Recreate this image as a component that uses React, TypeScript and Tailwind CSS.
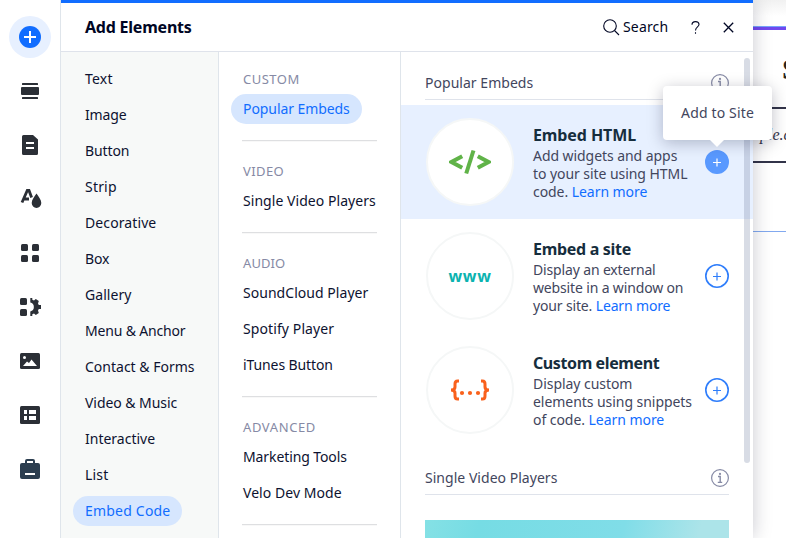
import React from "react";

type Item = { name: string; tracking: string; active?: boolean };

const categories: Item[] = [
  { name: "Text", tracking: "tracking-[0.2px]" },
  { name: "Image", tracking: "tracking-[-0.15px]" },
  { name: "Button", tracking: "tracking-[-0.1px]" },
  { name: "Strip", tracking: "tracking-[0.2px]" },
  { name: "Decorative", tracking: "tracking-[0.1px]" },
  { name: "Box", tracking: "tracking-[-0.1px]" },
  { name: "Gallery", tracking: "tracking-[0.05px]" },
  { name: "Menu & Anchor", tracking: "tracking-[-0.18px]" },
  { name: "Contact & Forms", tracking: "tracking-normal" },
  { name: "Video & Music", tracking: "tracking-[-0.05px]" },
  { name: "Interactive", tracking: "tracking-normal" },
  { name: "List", tracking: "tracking-[0.2px]" },
  { name: "Embed Code", tracking: "tracking-[0.2px]", active: true },
];

const sections: { title: string; tracking: string; items: Item[] }[] = [
  {
    title: "CUSTOM",
    tracking: "tracking-[0.5px]",
    items: [{ name: "Popular Embeds", tracking: "tracking-[-0.08px]", active: true }],
  },
  {
    title: "VIDEO",
    tracking: "tracking-[0.4px]",
    items: [{ name: "Single Video Players", tracking: "tracking-[0.05px]" }],
  },
  {
    title: "AUDIO",
    tracking: "tracking-[0.1px]",
    items: [
      { name: "SoundCloud Player", tracking: "tracking-[0.04px]" },
      { name: "Spotify Player", tracking: "tracking-[0.1px]" },
      { name: "iTunes Button", tracking: "tracking-[-0.1px]" },
    ],
  },
  {
    title: "ADVANCED",
    tracking: "tracking-[0.6px]",
    items: [
      { name: "Marketing Tools", tracking: "tracking-[-0.1px]" },
      { name: "Velo Dev Mode", tracking: "tracking-[0.05px]" },
    ],
  },
];

function MenuItem({ item }: { item: Item }) {
  return (
    <div
      className={`flex h-[30px] w-fit items-center whitespace-nowrap rounded-full px-3 text-sm ${item.tracking} ${
        item.active ? "bg-[#d6e6fe] text-[#116dff]" : "text-[#0d1230]"
      }`}
    >
      {item.name}
    </div>
  );
}

function RailIcon({ children }: { children: React.ReactNode }) {
  return (
    <div className="flex h-[54px] items-center justify-center">
      <svg width="24" height="24" viewBox="0 0 24 24" fill="#2b2f36">
        {children}
      </svg>
    </div>
  );
}

function Rail() {
  return (
    <nav className="relative z-20 w-[61px] shrink-0 border-r border-[#dfe5eb] bg-white pt-[10px]">
      <div className="flex h-[54px] items-center justify-center">
        <div className="flex size-[42px] items-center justify-center rounded-full bg-[#e7f0ff]">
          <svg width="22" height="22" viewBox="0 0 22 22">
            <circle cx="11" cy="11" r="11" fill="#116dff" />
            <path d="M11 5v12M5 11h12" stroke="#fff" strokeWidth="2" />
          </svg>
        </div>
      </div>
      <RailIcon>
        <rect x="4" y="4" width="16" height="2" rx="0.5" />
        <rect x="3" y="8" width="18" height="8" rx="1" />
        <rect x="4" y="18" width="16" height="2" rx="0.5" />
      </RailIcon>
      <RailIcon>
        <path d="M5.500 2H15L20 6.500V20.500a1.500 1.500 0 0 1-1.500 1.500H5.500A1.500 1.500 0 0 1 4 20.500v-17A1.500 1.500 0 0 1 5.500 2z" />
        <path d="M8 10h8M8 15h8" stroke="#fff" strokeWidth="2" />
      </RailIcon>
      <RailIcon>
        <path d="M4 15.500 9.300 3.500H11l2.600 7M6.500 12h4.500" fill="none" stroke="#2b2f36" strokeWidth="2.800" />
        <path d="M18.500 6.500c2 3.200 4.800 6.100 4.800 9.600a4.800 4.800 0 0 1-9.600 0c0-3.500 2.800-6.400 4.800-9.600z" />
      </RailIcon>
      <RailIcon>
        <rect x="3" y="3" width="7" height="7" rx="1.500" />
        <rect x="14" y="3" width="7" height="7" rx="1.500" />
        <rect x="3" y="14" width="7" height="7" rx="1.500" />
        <rect x="14" y="14" width="7" height="7" rx="1.500" />
      </RailIcon>
      <RailIcon>
        <rect x="2" y="3" width="7" height="7" rx="1.500" />
        <rect x="2" y="14" width="7" height="7" rx="1.500" />
        <path d="M12.300 3h2v1.800l1.700.7 1.800-1.400 3 2-.8 2.300.8 1.600H23v4h-2.200l-.8 1.600.8 2.300-3 2-1.800-1.400-1.700.7V21h-2v-4.600a4.500 4.500 0 0 0 0-8.800z" />
      </RailIcon>
      <RailIcon>
        <rect x="2" y="4" width="20" height="16" rx="1.500" />
        <circle cx="6.500" cy="8.500" r="1.500" fill="#fff" />
        <path d="M5 17l4-4.500 2 1.500 2.500-3.500L19 17z" fill="#fff" />
      </RailIcon>
      <RailIcon>
        <rect x="2" y="3" width="20" height="18" rx="1.500" />
        <path d="M6 7h3v4H6zM11 7h7v4h-7zM6 13h3v4H6zM11 13h7v4h-7z" fill="#fff" />
      </RailIcon>
      <RailIcon>
        <path
          fill="#2c3e50"
          d="M7 6V4a2 2 0 0 1 2-2h6a2 2 0 0 1 2 2v2h3a2 2 0 0 1 2 2v12a2 2 0 0 1-2 2H4a2 2 0 0 1-2-2V8a2 2 0 0 1 2-2zM9 4v2h6V4z"
          fillRule="evenodd"
        />
        <path d="M7 17h10" stroke="#fff" strokeWidth="2" />
      </RailIcon>
    </nav>
  );
}

function InfoIcon() {
  return (
    <svg width="18" height="18" viewBox="0 0 18 18" fill="none" stroke="#868aa5">
      <circle cx="9" cy="9" r="8.400" strokeWidth="1.200" />
      <path d="M7 7.500h2.200v5.500M6.800 13.400h4.400" strokeWidth="1.400" />
      <circle cx="9" cy="4.900" r="1.100" fill="#868aa5" stroke="none" />
    </svg>
  );
}

function CodeArt() {
  return (
    <svg width="42" height="26" viewBox="0 0 42 26" fill="none" stroke="#60b348" strokeWidth="4">
      <path d="M13.200 7.200 2.500 13l10.700 5.800M28.800 7.200 39.500 13l-10.700 5.800" />
      <path d="M24.500 1.500 17.200 24.500" />
    </svg>
  );
}

function BracesArt() {
  return (
    <svg width="40" height="22" viewBox="0 0 40 22" fill="none" stroke="#f9611c" strokeWidth="3">
      <path d="M9 2H7.500Q5 2 5 5v3q0 3-4 3 4 0 4 3v3q0 3 2.500 3H9M31 2h1.500Q35 2 35 5v3q0 3 4 3-4 0-4 3v3q0 3-2.500 3H31" />
      <g fill="#f9611c" stroke="none">
        <circle cx="12" cy="14" r="2.100" />
        <circle cx="20" cy="14" r="2.100" />
        <circle cx="28" cy="14" r="2.100" />
      </g>
    </svg>
  );
}

function AddButton({ filled }: { filled?: boolean }) {
  return (
    <svg width="24" height="24" viewBox="0 0 24 24">
      <circle cx="12" cy="12" r="11.200" fill={filled ? "#5999ff" : "#fff"} stroke={filled ? "#5999ff" : "#2e7dfb"} strokeWidth="1.600" />
      <path d="M12 8.500v8M8 12.500h8" stroke={filled ? "#fff" : "#2e7dfb"} strokeWidth="1.200" />
    </svg>
  );
}

type Embed = {
  title: string;
  titleTracking: string;
  tracking: string;
  lines: [string, string, string];
  art: React.ReactNode;
  active?: boolean;
};

const embeds: Embed[] = [
  {
    title: "Embed HTML",
    titleTracking: "tracking-[-0.1px]",
    tracking: "tracking-[-0.06px]",
    lines: ["Add widgets and apps", "to your site using HTML", "code."],
    art: <CodeArt />,
    active: true,
  },
  {
    title: "Embed a site",
    titleTracking: "tracking-[-0.3px]",
    tracking: "tracking-[-0.15px]",
    lines: ["Display an external", "website in a window on", "your site."],
    art: <span className="text-base font-bold tracking-[0.7px] text-[#0bb3b0]">www</span>,
  },
  {
    title: "Custom element",
    titleTracking: "tracking-[-0.4px]",
    tracking: "tracking-[-0.05px]",
    lines: ["Display custom", "elements using snippets", "of code."],
    art: <BracesArt />,
  },
];

function EmbedRow({ embed }: { embed: Embed }) {
  return (
    <article className={`flex h-[114px] items-center pl-[25px] pr-6 ${embed.active ? "bg-[#e7f0ff]" : ""}`}>
      <div className="flex size-[88px] shrink-0 items-center justify-center rounded-full border-2 border-[#f5f7f7] bg-white">
        {embed.art}
      </div>
      <div className="ml-[19px] flex-1 whitespace-nowrap text-sm leading-[18px] text-[#42465d]">
        <h3 className={`mb-[1px] text-base font-bold leading-[22px] text-[#162d3d] ${embed.titleTracking}`}>{embed.title}</h3>
        <p className={embed.tracking}>
          {embed.lines[0]}
          <br />
          {embed.lines[1]}
          <br />
          {embed.lines[2]} <a className="text-[#116dff]">Learn more</a>
        </p>
      </div>
      <div className="relative shrink-0">
        <AddButton filled={embed.active} />
        {embed.active && (
          <div className="absolute -left-[42px] -top-16 z-20 flex h-[54px] w-[109px] items-center justify-center rounded bg-white text-sm tracking-[0.15px] text-[#42465d] shadow-[0_3px_16px_rgba(0,6,36,0.25)]">
            Add to Site
            <svg className="absolute left-[47px] top-[54px]" width="14" height="7" viewBox="0 0 14 7">
              <path d="M0 0h14L7 7z" fill="#fff" />
            </svg>
          </div>
        )}
      </div>
    </article>
  );
}

function GroupTitle({ title }: { title: string }) {
  return (
    <div className="mx-6 flex h-[33px] items-center justify-between border-b border-[#dfe3eb] text-sm tracking-[0.03px] text-[#42465d]">
      {title}
      <InfoIcon />
    </div>
  );
}

function Header() {
  return (
    <header className="flex h-[52px] shrink-0 items-center border-b border-t-[3px] border-b-[#dfe3eb] border-t-[#116dff] pl-6 pr-[19px] text-[#000624]">
      <h2 className="flex-1 text-base font-bold tracking-[-0.22px]">Add Elements</h2>
      <svg width="17" height="17" viewBox="0 0 17 17" fill="none" stroke="#000624" strokeWidth="1.100">
        <circle cx="7" cy="7" r="6.300" />
        <path d="m11.500 11.500 4.500 4.500" />
      </svg>
      <span className="ml-[3px] w-[63px] whitespace-nowrap text-sm tracking-[0.15px]">Search</span>
      <svg className="ml-[5px]" width="9" height="13" viewBox="0 0 9 13" fill="none" stroke="#000624" strokeWidth="1.100">
        <path d="M1 3.800C1 1.800 2.500.6 4.500.6S8 1.800 8 3.600C8 6 4.500 6 4.500 9.500M4.500 11.300v1.400" />
      </svg>
      <svg className="ml-[23px]" width="11" height="11" viewBox="0 0 11 11" stroke="#000624" strokeWidth="1.300">
        <path d="m.8.8 9.400 9.400M10.200.8.8 10.200" />
      </svg>
    </header>
  );
}

function Canvas() {
  return (
    <section className="min-w-0 flex-1 overflow-hidden bg-gradient-to-b from-[#f1f1f1] via-white via-[3%] to-white pt-[26px]">
      <div className="h-1 border-t border-[#75a5fa] bg-[#7048ee]" />
      <div className="flex h-[77px] items-center pl-[29px] font-['Liberation_Serif',serif] text-3xl font-bold text-[#252422]">S</div>
      <div className="flex h-14 items-center border-y-2 border-[#323449] pl-[7px] font-['Liberation_Serif',serif] text-base italic text-[#323449]">
        ple.c
      </div>
      <div className="h-[69px] border-b border-[#82a9ef]" />
    </section>
  );
}

export default function App() {
  return (
    <main className="flex h-[538px] w-[786px] overflow-hidden bg-white font-['Noto_Sans',sans-serif]">
      <Rail />
      <div className="relative z-10 flex w-[692px] shrink-0 flex-col bg-white shadow-[0_0_18px_rgba(0,6,36,0.22)]">
        <Header />
        <div className="flex min-h-0 flex-1">
          <div className="flex w-[158px] shrink-0 flex-col gap-1.5 border-r border-[#dfe5eb] bg-[#f7f9f8] pl-3 pt-3">
            {categories.map((item) => (
              <MenuItem key={item.name} item={item} />
            ))}
          </div>
          <div className="w-[182px] shrink-0 overflow-hidden border-r border-[#dfe5eb] pl-3 pt-3">
            {sections.map((section) => (
              <section key={section.title} className="mb-3.5">
                <h3 className={`flex h-[30px] items-center pl-3 pt-px text-[13px] text-[#868aa5] ${section.tracking}`}>
                  {section.title}
                </h3>
                <div className="flex flex-col gap-1.5">
                  {section.items.map((item) => (
                    <MenuItem key={item.name} item={item} />
                  ))}
                </div>
                <div className="ml-[11px] mt-4 h-0.5 w-[135px] border-b border-t border-b-[#f8f8f8] border-t-[#dedfe1]" />
              </section>
            ))}
          </div>
          <div className="relative min-w-0 flex-1 overflow-visible pt-[15px]">
            <GroupTitle title="Popular Embeds" />
            <div className="mt-[5px]">
              {embeds.map((embed) => (
                <EmbedRow key={embed.title} embed={embed} />
              ))}
            </div>
            <div className="mt-[15px]">
              <GroupTitle title="Single Video Players" />
            </div>
            <div className="mx-6 mt-[25px] h-[18px] bg-linear-[105deg,#85e1e5_0%,#76dce4_18%,#80dde8_65%,#ace4e9_90%]" />
            <div className="absolute right-[3px] top-[6px] h-[405px] w-1.5 rounded-full bg-[#7d8aa8]/30" />
          </div>
        </div>
      </div>
      <Canvas />
    </main>
  );
}
